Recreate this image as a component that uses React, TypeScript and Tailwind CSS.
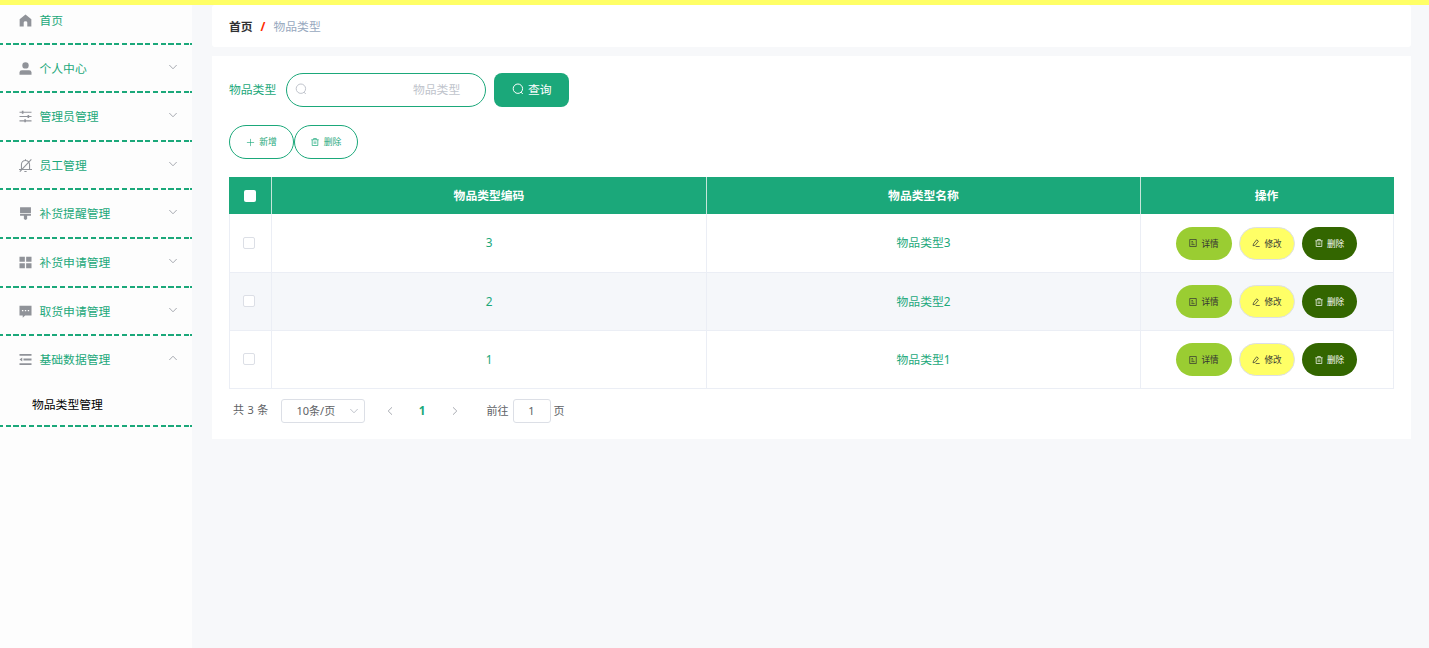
import type { ReactNode } from 'react';

const paths: Record<string, ReactNode> = {
  home: <path d="M8 .6 .8 6.6V15.4h5V10.4Q5.8 8.8 8 8.8t2.2 1.6v5h5V6.6z" />,
  user: (
    <>
      <circle cx="8" cy="4.2" r="3.9" />
      <path d="M.6 15.6V13Q.6 10 3.6 10h8.8q3 0 3 3v2.6z" />
    </>
  ),
  sliders: (
    <>
      <path d="M.6 2h14.8v1.4H.6zM.6 7.3h14.8v1.4H.6zM.6 12.6h14.8V14H.6z" />
      <path d="M3.5 .9h2v3.6h-2zM10.5 6.2h2v3.6h-2zM6.5 11.5h2v3.6h-2z" />
    </>
  ),
  bell: (
    <g fill="none" stroke="currentColor" strokeWidth="1.3">
      <path d="M3 12.7V6.8a5 5 0 0 1 10 0v5.9M0 13h16M8 .2v1.6M15.2 .6 1 15.6M6.6 15.3h2.8" />
    </g>
  ),
  brush: <path d="M1.3 .4h13.4v7H1.3zM1.3 8.3h13.4v2.4H10v4L8 16l-2-1.3v-4H1.3z" />,
  grid: <path d="M.6 .8h6.6v6.4H.6zM8.8 .8h6.6v6.4H8.8zM.6 8.8h6.6v6.4H.6zM8.8 8.8h6.6v6.4H8.8z" />,
  chat: (
    <path
      fillRule="evenodd"
      d="M.6 1h14.8v11.8H7.5L4.6 15.6v-2.8h-4zM3.6 6v1.7h1.7V6zM7.2 6v1.7h1.7V6zM10.8 6v1.7h1.7V6z"
    />
  ),
  fold: <path d="M.6 1.2h14.8v2.2H.6zM5.5 6.9h9.9v2.2H5.5zM.6 12.6h14.8v2.2H.6zM.6 8 4 5.6v4.8z" />,
};

const menu = [
  { icon: 'user', label: '个人中心', height: 'h-[48px]' },
  { icon: 'sliders', label: '管理员管理', height: 'h-[49px]' },
  { icon: 'bell', label: '员工管理', height: 'h-[48px]' },
  { icon: 'brush', label: '补货提醒管理', height: 'h-[49px]' },
  { icon: 'grid', label: '补货申请管理', height: 'h-[49px]' },
  { icon: 'chat', label: '取货申请管理', height: 'h-[48px]' },
];

const rows = [
  { code: 3, name: '物品类型3', style: 'h-[58px] bg-white' },
  { code: 2, name: '物品类型2', style: 'h-[58px] bg-[#f5f7fa]' },
  { code: 1, name: '物品类型1', style: 'h-[58px] bg-white' },
];

function MenuIcon({ name }: { name: string }) {
  return (
    <svg viewBox="0 0 16 16" fill="currentColor" className="h-[13px] w-[13px] shrink-0 text-[#909399]">
      {paths[name]}
    </svg>
  );
}

function Dashes() {
  return (
    <div className="h-[2px] w-full shrink-0 bg-[repeating-linear-gradient(90deg,#1ba87a_0_5px,transparent_5px_7.75px)] bg-[position:-2px_0]" />
  );
}

function Chevron({ className }: { className: string }) {
  return (
    <svg viewBox="0 0 10 10" fill="none" stroke="currentColor" className={`h-[10px] w-[10px] shrink-0 ${className}`}>
      <path d="m1.3 3 3.7 3.8L8.7 3" />
    </svg>
  );
}

function Search() {
  return (
    <svg viewBox="0 0 12 12" fill="none" stroke="currentColor" className="mb-0.5 h-3 w-3 shrink-0">
      <circle cx="5.9" cy="5.7" r="4.7" />
      <path d="m8.8 9 2 2" />
    </svg>
  );
}

function Trash() {
  return (
    <svg viewBox="0 0 10 10" fill="none" stroke="currentColor" strokeWidth=".9" className="h-2 w-2">
      <path d="M.4 2.2h9.2M3.3 2V.6h3.4V2M1.5 2.4v7h7v-7M4 4.2v3.2M6 4.2v3.2" />
    </svg>
  );
}

function Detail() {
  return (
    <svg viewBox="0 0 10 10" fill="none" stroke="currentColor" strokeWidth=".9" className="h-2 w-2">
      <path d="M.9 .6h8.2v8.8H.9zM3 3.2h2M3 5h2.6M3 7h4" />
    </svg>
  );
}

function Edit() {
  return (
    <svg viewBox="0 0 10 10" fill="none" stroke="currentColor" strokeWidth=".9" className="h-2 w-2">
      <path d="M1.3 8.5 1.9 6 5.8 1l2.2 1.7-3.9 5zM4.6 9.4h5" />
    </svg>
  );
}

function Sidebar() {
  return (
    <aside className="flex w-[192px] shrink-0 flex-col bg-[#fdfdfd] text-[#1ba87a]">
      <div className="flex h-[38px] items-start pt-[6px] pl-[19px]">
        <div className="flex h-[18px] items-center gap-[7.5px]">
          <MenuIcon name="home" />
          <span className="pb-px">首页</span>
        </div>
      </div>
      <Dashes />
      {menu.map((item) => (
        <div key={item.label} className={`flex flex-col ${item.height}`}>
          <div className="flex flex-1 items-center gap-[7.5px] pr-[14px] pl-[19px]">
            <MenuIcon name={item.icon} />
            <span className="flex-1 pb-px">{item.label}</span>
            <Chevron className="mb-[3px] text-[#a8abb2]" />
          </div>
          <Dashes />
        </div>
      ))}
      <div className="flex h-[47px] items-center gap-[7.5px] pr-[14px] pl-[19px]">
        <MenuIcon name="fold" />
        <span className="flex-1 pb-px">基础数据管理</span>
        <Chevron className="mb-[3px] rotate-180 text-[#a8abb2]" />
      </div>
      <div className="flex h-[42px] items-center pl-8 text-black">物品类型管理</div>
      <Dashes />
    </aside>
  );
}

function Table() {
  return (
    <table className="w-[1164px] table-fixed border-collapse text-center text-[#1ba87a]">
      <colgroup>
        <col className="w-[42px]" />
        <col className="w-[435px]" />
        <col className="w-[434px]" />
        <col className="w-[253px]" />
      </colgroup>
      <thead>
        <tr className="h-[37px] bg-[#1ba87a] font-bold text-white">
          <th className="border-r border-l border-r-[#c5e6da] border-l-[#1ba87a] pr-px">
            <div className="mx-auto h-3 w-3 rounded-[2px] bg-white" />
          </th>
          <th className="border-r border-[#c5e6da] pb-0.5">物品类型编码</th>
          <th className="border-r border-[#c5e6da] pb-0.5">物品类型名称</th>
          <th className="border-r border-[#1ba87a] pr-px pb-0.5">操作</th>
        </tr>
      </thead>
      <tbody>
        {rows.map((row) => (
          <tr key={row.code} className={row.style}>
            <td className="border border-t-0 border-[#ebeef5] pr-[3px]">
              <div className="mx-auto h-3 w-3 rounded-[2px] border border-[#dcdfe6] bg-white" />
            </td>
            <td className="border border-t-0 border-[#ebeef5] pb-px">{row.code}</td>
            <td className="border border-t-0 border-[#ebeef5] pb-px">{row.name}</td>
            <td className="border border-t-0 border-[#ebeef5] pt-px pr-px">
              <div className="flex justify-center gap-[7px] text-[8.6px]">
                <button className="flex h-[33px] w-14 items-center justify-center gap-1 rounded-full bg-[#9acd32] text-[#333]">
                  <Detail />
                  <span className="pt-px">详情</span>
                </button>
                <button className="flex h-[33px] w-14 items-center justify-center gap-1 rounded-full border border-[#dcdfe6] bg-[#ffff66] text-[#333]">
                  <Edit />
                  <span className="pt-px">修改</span>
                </button>
                <button className="flex h-[33px] w-[55px] items-center justify-center gap-1 rounded-full bg-[#336600] text-white">
                  <Trash />
                  <span className="pt-px">删除</span>
                </button>
              </div>
            </td>
          </tr>
        ))}
      </tbody>
    </table>
  );
}

function Pagination() {
  return (
    <div className="flex h-6 items-center pl-1 text-[11px] text-[#606266]">
      <span className="w-[47.5px] pb-px whitespace-nowrap [word-spacing:.6px]">共 3 条</span>
      <div className="flex h-6 w-[84px] items-center rounded-[3px] border border-[#dcdfe6] pr-[5px] pl-[15px]">
        <span className="flex-1">10条/页</span>
        <Chevron className="text-[#c0c4cc]" />
      </div>
      <Chevron className="ml-5 rotate-90 text-[#a8abb2]" />
      <span className="w-[55px] pb-px text-center text-[11.8px] font-bold text-[#1ba87a]">1</span>
      <Chevron className="-rotate-90 text-[#a8abb2]" />
      <span className="ml-[27px] w-[26px] whitespace-nowrap">前往</span>
      <div className="flex h-6 w-[38px] items-center justify-center rounded-[3px] border border-[#dcdfe6]">1</div>
      <span className="ml-[3px]">页</span>
    </div>
  );
}

export default function App() {
  return (
    <div className="flex h-screen flex-col overflow-hidden bg-[#f7f8fa] font-['Noto_Sans','Noto_Sans_CJK_SC',sans-serif] text-[11.8px] leading-[18px]">
      <div className="h-[5px] shrink-0 bg-[#ffff66]" />
      <div className="flex min-h-0 flex-1">
        <Sidebar />
        <main className="flex flex-1 flex-col gap-[9px] pr-[19px] pl-5">
          <div className="flex h-[42px] items-center rounded-[3px] bg-white pl-[17px]">
            <span className="font-bold text-[#303133]">首页</span>
            <span className="mx-2 font-bold text-[#ff2a00]">/</span>
            <span className="text-[#97a8be]">物品类型</span>
          </div>
          <div className="h-[383px] bg-white px-[17px] pt-4">
            <div className="flex h-[35px] items-center">
              <span className="pb-0.5 text-[#1ba87a]">物品类型</span>
              <div className="ml-[10px] flex h-[34px] w-[200px] items-center justify-between rounded-full border border-[#1ba87a] pr-[25px] pl-2 text-[#c0c4cc]">
                <Search />
                <span className="pb-0.5">物品类型</span>
              </div>
              <button className="ml-2 flex h-[34px] w-[75px] items-center justify-center gap-1 rounded-lg bg-[#1ba87a] text-white">
                <Search />
                <span className="pb-0.5">查询</span>
              </button>
            </div>
            <div className="mt-[18px] flex text-[8.8px] text-[#1ba87a]">
              <button className="flex h-[34px] w-[65px] items-center justify-center gap-1 rounded-full border border-[#1ba87a]">
                <svg viewBox="0 0 10 10" stroke="currentColor" strokeWidth=".7" className="h-[9px] w-[9px]">
                  <path d="M5 1v8M1 5h8" />
                </svg>
                新增
              </button>
              <button className="flex h-[34px] w-16 items-center justify-center gap-[5px] rounded-full border border-[#1ba87a]">
                <Trash />
                删除
              </button>
            </div>
            <div className="mt-[18px]">
              <Table />
            </div>
            <div className="mt-[10px]">
              <Pagination />
            </div>
          </div>
        </main>
      </div>
    </div>
  );
}
